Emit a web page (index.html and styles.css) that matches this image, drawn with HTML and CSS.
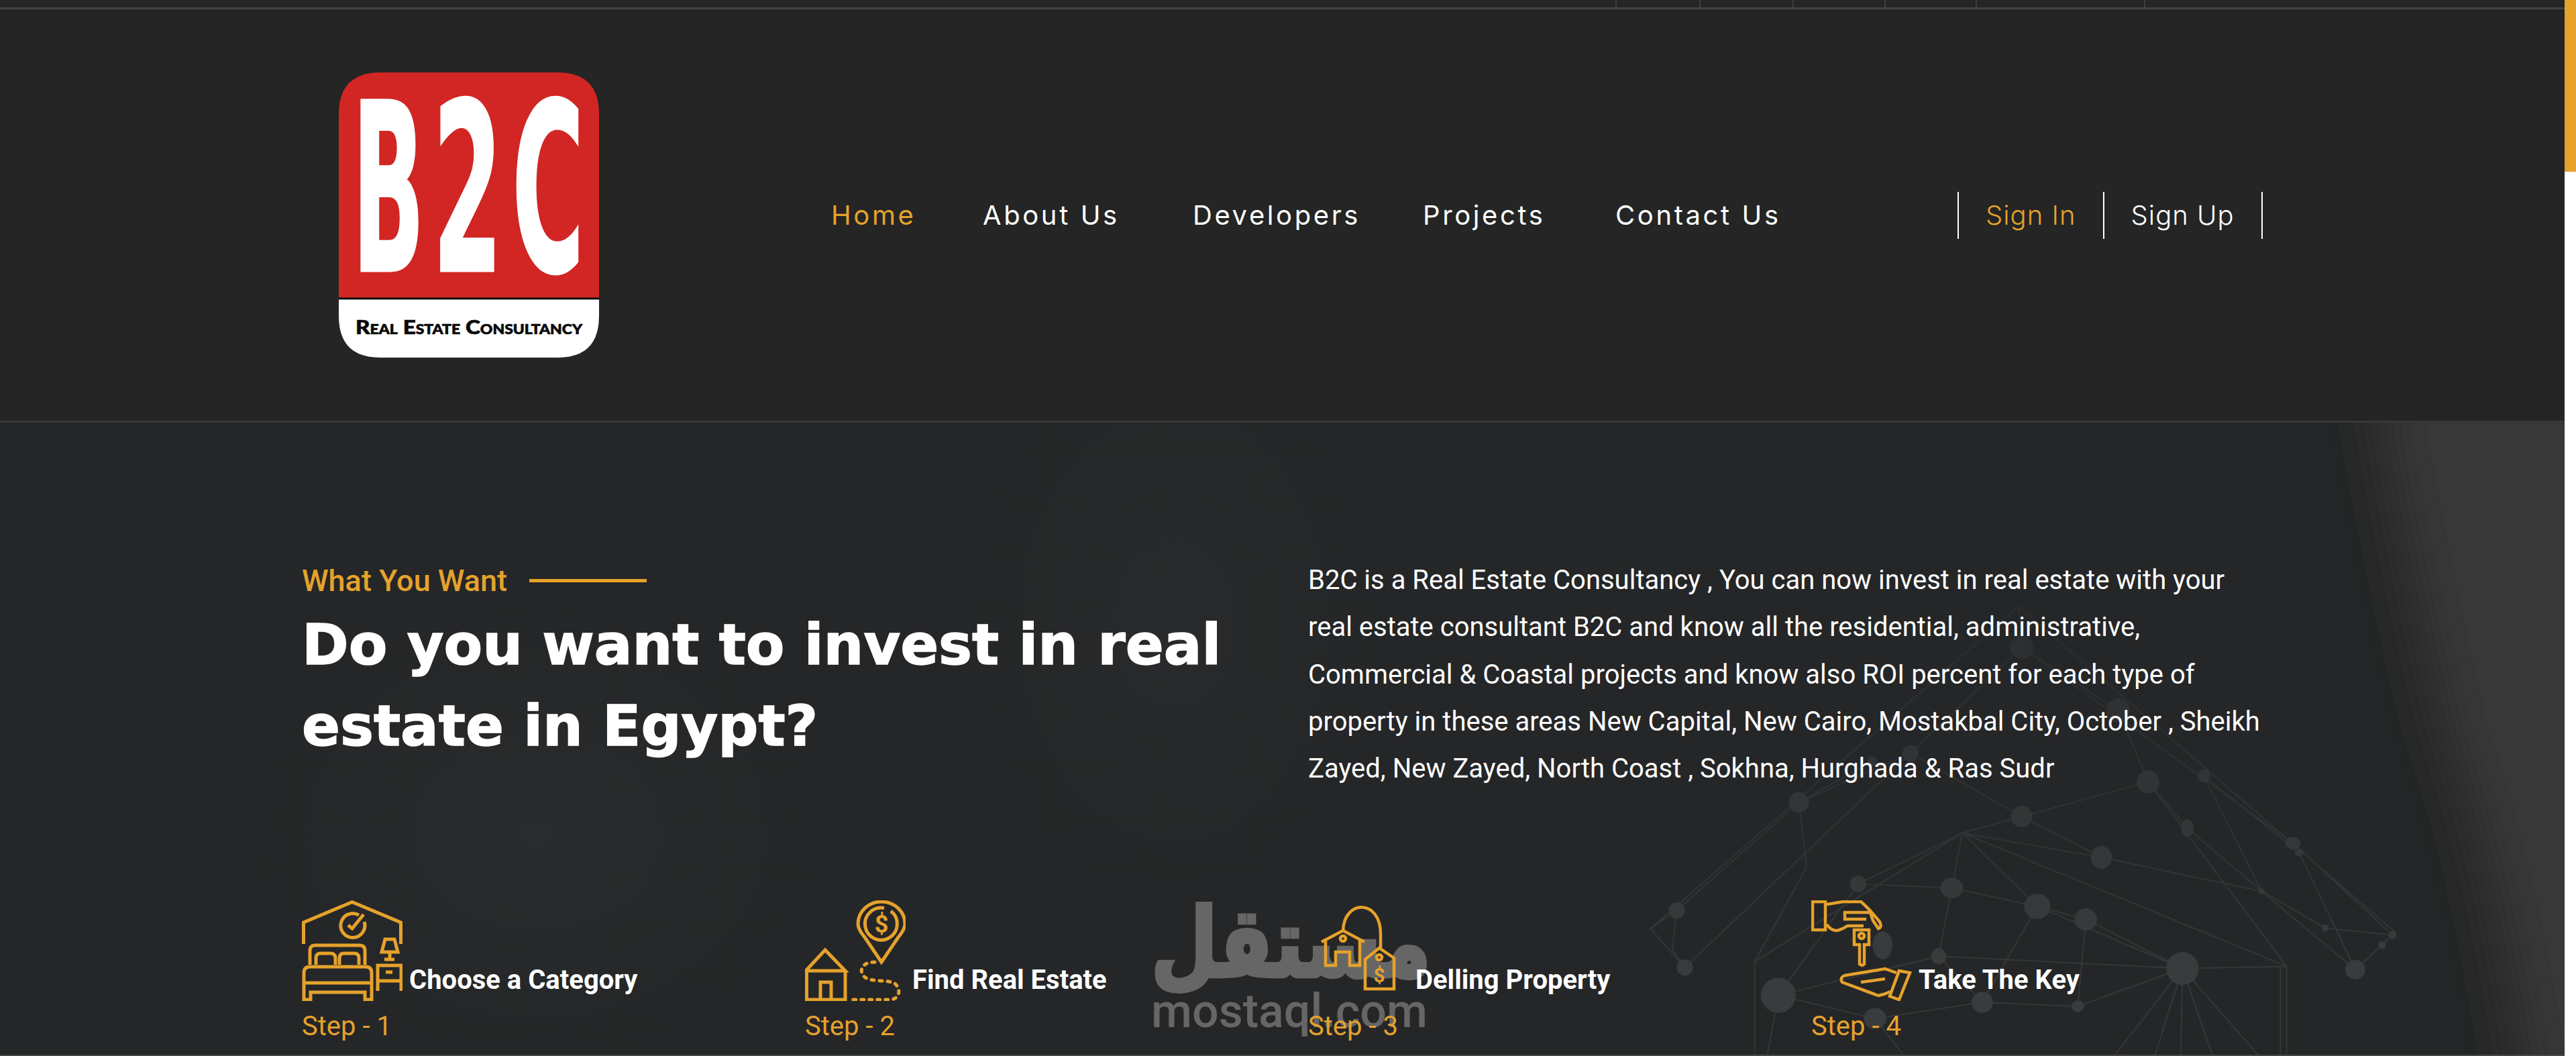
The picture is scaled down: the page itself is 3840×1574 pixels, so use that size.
FILE: index.html
```html
<!DOCTYPE html>
<html lang="en">
<head>
    <meta charset="UTF-8">
    <meta name="viewport" content="width=device-width, initial-scale=1.0">
    <title>B2C Real Estate Consultancy</title>
    <link rel="stylesheet" href="styles.css">
</head>
<body>
    <div class="page">
        <div class="top-strip">
            <span></span><span></span><span></span><span></span><span></span><span></span>
        </div>

        <header class="site-header">
            <svg class="logo" viewBox="0 0 388 425" aria-label="B2C Real Estate Consultancy">
                <path class="logo-red" d="M0 338V62Q0 0 62 0H326Q388 0 388 62V338Z"/>
                <path class="logo-white" d="M0 338H388V363Q388 425 326 425H62Q0 425 0 363Z"/>
                <path class="logo-rule" d="M0 337H388"/>
                <text class="logo-big" x="20" y="296" textLength="108" lengthAdjust="spacingAndGlyphs">B</text>
                <text class="logo-big" x="140" y="296" textLength="104" lengthAdjust="spacingAndGlyphs">2</text>
                <text class="logo-big" x="258" y="296" textLength="108" lengthAdjust="spacingAndGlyphs">C</text>
                <text class="logo-small" x="25" y="390" textLength="338" lengthAdjust="spacingAndGlyphs">Real Estate Consultancy</text>
            </svg>

            <nav class="main-nav">
                <a class="active" href="#">Home</a>
                <a href="#">About Us</a>
                <a href="#">Developers</a>
                <a href="#">Projects</a>
                <a href="#">Contact Us</a>
            </nav>

            <div class="auth-links">
                <a class="active" href="#">Sign In</a>
                <a href="#">Sign Up</a>
            </div>
        </header>

        <main class="want-section">
            <!-- faint house network behind the steps -->
            <svg class="bg-art" viewBox="0 0 1549 1568" preserveAspectRatio="none" aria-hidden="true">
                <defs>
                    <filter id="soft" x="-40%" y="-10%" width="180%" height="120%"><feGaussianBlur stdDeviation="45 40"/></filter>
                    <linearGradient id="lineFade" gradientUnits="userSpaceOnUse" x1="0" y1="450" x2="0" y2="1350">
                        <stop offset="0" stop-color="#2b2c2e"/>
                        <stop offset="1" stop-color="#353638"/>
                    </linearGradient>
                    <linearGradient id="nodeFade" gradientUnits="userSpaceOnUse" x1="0" y1="450" x2="0" y2="1350">
                        <stop offset="0" stop-color="#2c2d2e"/>
                        <stop offset="1" stop-color="#3a3b3c"/>
                    </linearGradient>
                </defs>
                <path class="bg-stripe" filter="url(#soft)" d="M1230 -60H1660V1640H1470Q1420 1100 1340 760Q1280 380 1230 -60Z"/>
                <path class="net-lines" stroke="url(#lineFade)" d="M655 450L65 1240L120 1335L660 550L1095 1030L1255 1255L1195 1340L1105 1053L952 865L1045 1148L1147 1238L1255 1255M655 450L1260 1250M655 450L660 550L815 705L863 880L1085 1332M660 550L482 810L303 930L107 1195L65 1240M303 930L315 1090L232 1320V1568M232 1320L565 1005L1085 1332V1568M1075 1568V1332M565 1005L788 1065L1045 1148L1195 1340M565 1005L685 1185L918 1337L1085 1332M398 1130L548 1140L685 1185L763 1217L918 1337M270 1403L398 1130L565 1005L548 1140L527 1307L597 1420L750 1430L918 1337M685 1185L597 1420M763 1217L750 1430M270 1403L527 1307L918 1337M270 1403L425 1460L597 1420M918 1337L800 1568M918 1337L870 1568M918 1337L915 1568M918 1337L970 1568M918 1337L1050 1568M425 1460L480 1568M425 1460L270 1403L250 1568M107 1195L100 1290L120 1335M660 965L565 1005M660 965L788 1065M660 965L863 880M420 830L303 930M482 810L660 965M926 993L863 880M926 993L1045 1148"/>
                <g fill="url(#nodeFade)">
                    <ellipse cx="660" cy="550" rx="19" ry="29"/>
                    <ellipse cx="815" cy="705" rx="19" ry="29"/>
                    <ellipse cx="482" cy="810" rx="13" ry="20"/>
                    <ellipse cx="420" cy="830" rx="8" ry="13"/>
                    <ellipse cx="863" cy="880" rx="18" ry="28"/>
                    <ellipse cx="952" cy="865" rx="10" ry="16"/>
                    <ellipse cx="303" cy="930" rx="16" ry="25"/>
                    <ellipse cx="660" cy="965" rx="17" ry="26"/>
                    <ellipse cx="926" cy="993" rx="10" ry="22"/>
                    <ellipse cx="1095" cy="1030" rx="12" ry="16"/>
                    <ellipse cx="1105" cy="1053" rx="7" ry="9"/>
                    <ellipse cx="788" cy="1065" rx="17" ry="28"/>
                    <ellipse cx="398" cy="1130" rx="13" ry="20"/>
                    <ellipse cx="548" cy="1140" rx="18" ry="25"/>
                    <ellipse cx="685" cy="1185" rx="21" ry="31"/>
                    <ellipse cx="763" cy="1217" rx="18" ry="27"/>
                    <ellipse cx="107" cy="1195" rx="13" ry="20"/>
                    <ellipse cx="120" cy="1335" rx="13" ry="20"/>
                    <ellipse cx="270" cy="1403" rx="28" ry="43"/>
                    <ellipse cx="918" cy="1337" rx="26" ry="40"/>
                    <ellipse cx="1195" cy="1340" rx="16" ry="24"/>
                    <ellipse cx="1255" cy="1255" rx="6" ry="10"/>
                    <ellipse cx="1238" cy="1280" rx="6" ry="10"/>
                    <ellipse cx="1147" cy="1238" rx="5" ry="9"/>
                    <ellipse cx="1045" cy="1148" rx="5" ry="7"/>
                    <ellipse cx="527" cy="1307" rx="12" ry="20"/>
                    <ellipse cx="597" cy="1420" rx="17" ry="26"/>
                    <ellipse cx="750" cy="1430" rx="10" ry="14"/>
                    <ellipse cx="425" cy="1460" rx="18" ry="26"/>
                    <ellipse cx="437" cy="1280" rx="16" ry="34"/>
                </g>
            </svg>

            <div class="watermark" aria-hidden="true">
                <span class="wm-arabic">مستقل</span>
                <span class="wm-latin">mostaql.com</span>
            </div>

            <section class="intro">
                <div>
                    <div class="eyebrow">What You Want<span class="eyebrow-line"></span></div>
                    <h1>Do you want to invest in real estate in Egypt?</h1>
                </div>
                <p>B2C is a Real Estate Consultancy , You can now invest in real estate with your real estate consultant B2C and know all the residential, administrative, Commercial &amp; Coastal projects and know also ROI percent for each type of property in these areas New Capital, New Cairo, Mostakbal City, October , Sheikh Zayed, New Zayed, North Coast , Sokhna, Hurghada &amp; Ras Sudr</p>
            </section>

            <section class="steps">
                <div class="step">
                    <div class="step-head">
                        <svg class="step-icon" viewBox="0 0 150 150">
                            <path d="M2.500 65V33L75 2.500L147.500 33V65"/>
                            <path d="M93 32A18 18 0 1 1 85 22"/>
                            <path d="M69 37L75 42L92 21"/>
                            <path d="M12 96V75Q12 67 20 67H86Q94 67 94 75V96"/>
                            <path d="M21 96V86Q21 79 28 79H42Q50 79 50 86V96M56 96V86Q56 79 63 79H78Q85 79 85 86V96"/>
                            <path d="M3 123V108Q3 99 12 99H95Q104 99 104 108V123ZM3 123V148H13V137H94V148H104V123"/>
                            <path d="M124 58H138L143 77H119ZM131 77V88M123 88H138"/>
                            <path d="M113 135V97H148V135M113 120H148"/>
                            <path d="M125 107H135"/>
                        </svg>
                        <h3>Choose a Category</h3>
                    </div>
                    <div class="step-label">Step - 1</div>
                </div>

                <div class="step">
                    <div class="step-head">
                        <svg class="step-icon" viewBox="0 0 150 150">
                            <path d="M114 92L89 55Q79 43 79 35A35 33 0 1 1 149 35Q149 43 139 55Z"/>
                            <path d="M128 16A24 24 0 1 1 118 11.500"/>
                            <text class="icon-dollar" x="114" y="48">$</text>
                            <path d="M1 105L30 74L60 105ZM2.500 105V148H60V105M23 148V122H39V148"/>
                            <path class="dotted" d="M104 92C82 92 80 108 90 115C98 122 125 118 134 124C143 132 142 146 128 148H67"/>
                        </svg>
                        <h3>Find Real Estate</h3>
                    </div>
                    <div class="step-label">Step - 2</div>
                </div>

                <div class="step">
                    <div class="step-head">
                        <svg class="step-icon" viewBox="0 0 150 150">
                            <path class="thin" d="M52 45C54 -2 108 -2 108 50V71"/>
                            <path class="thin" d="M20 62L52 45L84 62M26 58V97H41V77H62V97H77V58"/>
                            <circle class="thin" cx="52" cy="57" r="4"/>
                            <path class="thin" d="M106 71L85 88V132H128V86Z"/>
                            <circle class="thin" cx="106" cy="85" r="4"/>
                            <text class="icon-dollar tag-dollar" x="106" y="122">$</text>
                        </svg>
                        <h3>Delling Property</h3>
                    </div>
                    <div class="step-label">Step - 3</div>
                </div>

                <div class="step">
                    <div class="step-head">
                        <svg class="step-icon" viewBox="0 0 150 150">
                            <path class="thin" d="M2 2H21V44H2Z"/>
                            <path class="thin" d="M23 6L47 2H74Q86 12 102 32Q106 40 100 42L92 30L88 18H50V28H82M23 36Q32 48 42 44Q48 42 54 38H78"/>
                            <path class="thin" d="M64 44H86V66H79V95L76 97L72 95V66H64Z"/>
                            <circle class="thin" cx="75" cy="53" r="4"/>
                            <path class="thin" d="M131 105L147 108L131 148L117 143Z"/>
                            <path class="thin" d="M127 108L110 102L50 112Q42 115 46 122L100 142L108 140L118 136M74 122L110 117"/>
                        </svg>
                        <h3>Take The Key</h3>
                    </div>
                    <div class="step-label">Step - 4</div>
                </div>
            </section>
        </main>
    </div>

    <div class="scroll-track"><div class="scroll-thumb"></div></div>
</body>
</html>
```

FILE: styles.css
```css
* {
    box-sizing: border-box;
}

html, body {
    height: 1574px;
    overflow: hidden;
}

body {
    margin: 0;
    display: flex;
    background-color: #242524;
    font-family: Roboto, Arial, sans-serif;
    color: #fff;
}

a {
    color: inherit;
    text-decoration: none;
}

.page {
    flex: 1;
    min-width: 0;
    display: flex;
    flex-direction: column;
}

/* top bar, mostly cut off by the capture */
.top-strip {
    height: 14px;
    flex: none;
    padding-left: 2408px;
    display: grid;
    grid-template-columns: 125px 139px 137px 136px 251px 2px;
    border-bottom: 3px solid #414242;
}

.top-strip span {
    border-left: 2px solid #3e3f3f;
}

.site-header {
    height: 616px;
    flex: none;
    padding-left: 505px;
    display: flex;
    align-items: center;
    border-bottom: 3px solid #37383a;
}

.logo {
    width: 388px;
    height: 425px;
    flex: none;
    overflow: visible;
}

.logo-red { fill: #d12623; }
.logo-white { fill: #fff; }
.logo-rule { stroke: #111; stroke-width: 3; }

.logo-big {
    font-family: "DejaVu Sans", sans-serif;
    font-weight: 700;
    font-size: 350px;
    fill: #fff;
    stroke: #fff;
    stroke-width: 3;
}

.logo-small {
    font-family: Lato, sans-serif;
    font-weight: 900;
    font-variant: small-caps;
    font-size: 29px;
    fill: #0a0a0a;
    stroke: #0a0a0a;
    stroke-width: 0.700;
}

.main-nav {
    margin-left: 346px;
    display: grid;
    grid-template-columns: 226px 313px 343px 287px 510px;
    font-family: Inter, sans-serif;
    font-size: 40px;
    letter-spacing: 3.600px;
}

.main-nav .active,
.auth-links .active {
    color: #e5a22c;
}

.auth-links {
    display: flex;
    height: 70px;
    align-items: center;
    font-family: Inter, sans-serif;
    font-size: 40px;
    font-weight: 300;
    letter-spacing: 1px;
    border-right: 2px solid #fff;
}

.auth-links a {
    height: 100%;
    padding: 0 40px;
    display: flex;
    align-items: center;
    border-left: 2px solid #fff;
}

.want-section {
    position: relative;
    flex: 1;
    min-height: 0;
    padding: 208px 0 0 450px;
    overflow: hidden;
    background-color: #252627;
    background-image:
        radial-gradient(ellipse 420px 340px at 800px 610px, #2a2b2d, transparent),
        radial-gradient(ellipse 300px 420px at 1750px 300px, #292a2c, transparent);
    border-bottom: 2px solid #454646;
}

.bg-art {
    position: absolute;
    top: 0;
    right: -17px;
    width: 1440px;
    height: 954px;
}

.bg-stripe { fill: #383939; }

.net-lines {
    fill: none;
    stroke-width: 2;
    vector-effect: non-scaling-stroke;
}

.watermark {
    position: absolute;
    left: 1716px;
    top: 708px;
    width: 408px;
    color: #666;
    text-align: center;
}

.wm-arabic,
.wm-latin {
    display: block;
}

.wm-arabic {
    font-family: "DejaVu Sans", sans-serif;
    font-weight: 700;
    font-size: 114px;
    line-height: 136px;
    -webkit-text-stroke: 5px #666;
    transform: scaleY(1.25);
}

.wm-latin {
    margin-top: 8px;
    font-family: Roboto, sans-serif;
    font-weight: 500;
    font-size: 70px;
    line-height: 50px;
}

.intro {
    position: relative;
    height: 504px;
    display: grid;
    grid-template-columns: 1500px 1422px;
}

.eyebrow {
    display: flex;
    align-items: center;
    height: 54px;
    font-size: 45px;
    font-weight: 500;
    color: #e5a22c;
}

.eyebrow-line {
    width: 175px;
    height: 5px;
    margin-left: 33px;
    background-color: #e5a22c;
}

h1 {
    margin: 9px 0 0;
    width: 1420px;
    font-family: "DejaVu Sans", sans-serif;
    font-size: 84px;
    font-weight: 700;
    line-height: 121px;
    -webkit-text-stroke: 1.500px #fff;
}

.intro p {
    margin: -8px 0 0;
    font-size: 40px;
    line-height: 70.300px;
}

.steps {
    position: relative;
    display: grid;
    grid-template-columns: repeat(4, 750px);
}

.step-head {
    display: flex;
    align-items: flex-end;
}

.step-icon {
    width: 150px;
    height: 150px;
    flex: none;
    fill: none;
    stroke: #e5a22c;
    stroke-width: 5;
}

.step-icon .thin {
    stroke-width: 4.500;
}

.step-icon .dotted {
    stroke-dasharray: 4 8;
    stroke-linecap: round;
}

.icon-dollar {
    font-family: Roboto, sans-serif;
    font-weight: 700;
    font-size: 36px;
    text-anchor: middle;
    fill: #e5a22c;
    stroke: none;
}

.tag-dollar {
    font-size: 30px;
}

h3 {
    margin: 0 0 8px 10px;
    font-size: 40px;
    font-weight: 700;
    line-height: 46px;
}

.step-label {
    margin-top: 10px;
    font-size: 40px;
    line-height: 56px;
    color: #e5a22c;
}

.scroll-track {
    width: 17px;
    flex: none;
    background-color: #fff;
}

.scroll-thumb {
    height: 256px;
    background-color: #e5a22c;
}
```
